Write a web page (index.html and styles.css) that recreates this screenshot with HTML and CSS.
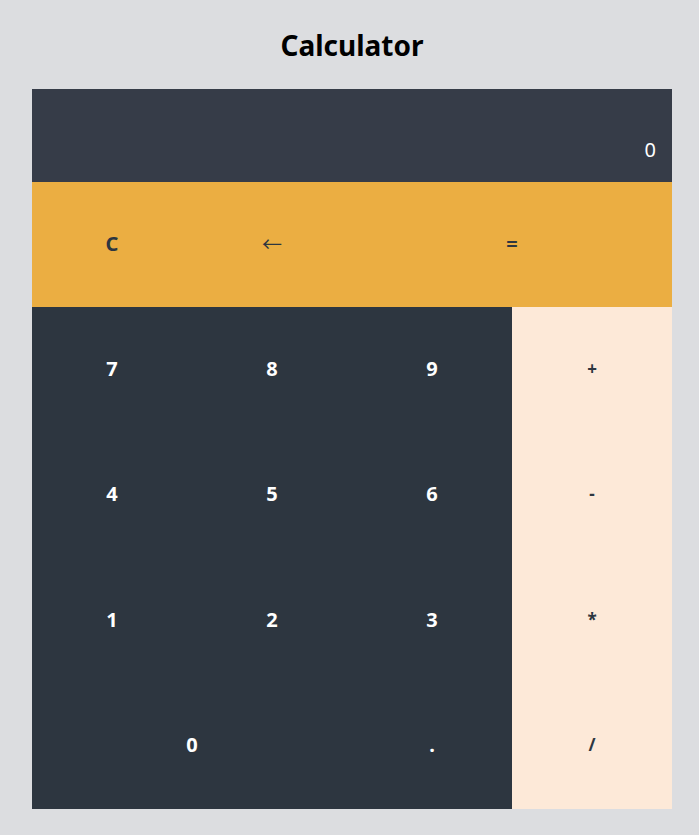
FILE: index.html
```html
<!DOCTYPE html>
<html lang="en">
<head>
<meta charset="utf-8">
<title>Calculator</title>
<link rel="stylesheet" href="styles.css">
</head>
<body>
<main class="page">
  <h1 class="title">Calculator</h1>
  <div class="calc">
    <div class="display">0</div>
    <button class="key fn">C</button>
    <button class="key fn arrow">←</button>
    <button class="key fn wide">=</button>
    <button class="key num">7</button>
    <button class="key num">8</button>
    <button class="key num">9</button>
    <button class="key op">+</button>
    <button class="key num">4</button>
    <button class="key num">5</button>
    <button class="key num">6</button>
    <button class="key op">-</button>
    <button class="key num">1</button>
    <button class="key num">2</button>
    <button class="key num">3</button>
    <button class="key op">*</button>
    <button class="key num wide">0</button>
    <button class="key num">.</button>
    <button class="key op">/</button>
  </div>
</main>
</body>
</html>
```

FILE: styles.css
```css
html, body {
  margin: 0;
  padding: 0;
  background: #dcdde0;
}
.page {
  padding: 22px 27px 0 32px;
  font-family: "Noto Sans", "Noto Sans CJK KR", sans-serif;
}
.title {
  margin: 0 0 21px;
  width: 640px;
  text-align: center;
  font-size: 28px;
  font-weight: 700;
  line-height: 46px;
  color: #000;
}
.calc {
  width: 640px;
  height: 720px;
  display: grid;
  grid-template-columns: repeat(4, 1fr);
  grid-template-rows: 93px repeat(5, 1fr);
}
.display {
  grid-column: 1 / -1;
  background: #363c48;
  color: #fff;
  font-size: 20px;
  font-weight: 400;
  display: flex;
  align-items: flex-end;
  justify-content: flex-end;
  padding: 0 16px 19px 0;
}
.key {
  border: 0;
  margin: 0;
  padding: 0 0 3px;
  font-family: inherit;
  font-size: 20px;
  font-weight: 700;
  display: flex;
  align-items: center;
  justify-content: center;
}
.wide {
  grid-column: span 2;
}
.fn {
  background: #ebae42;
  color: #2d3640;
}
.arrow {
  font-weight: 400;
  font-size: 20px;
}
.num {
  background: #2d3640;
  color: #fff;
}
.op {
  background: #fde9d8;
  color: #2d3640;
  font-size: 17px;
}
```
